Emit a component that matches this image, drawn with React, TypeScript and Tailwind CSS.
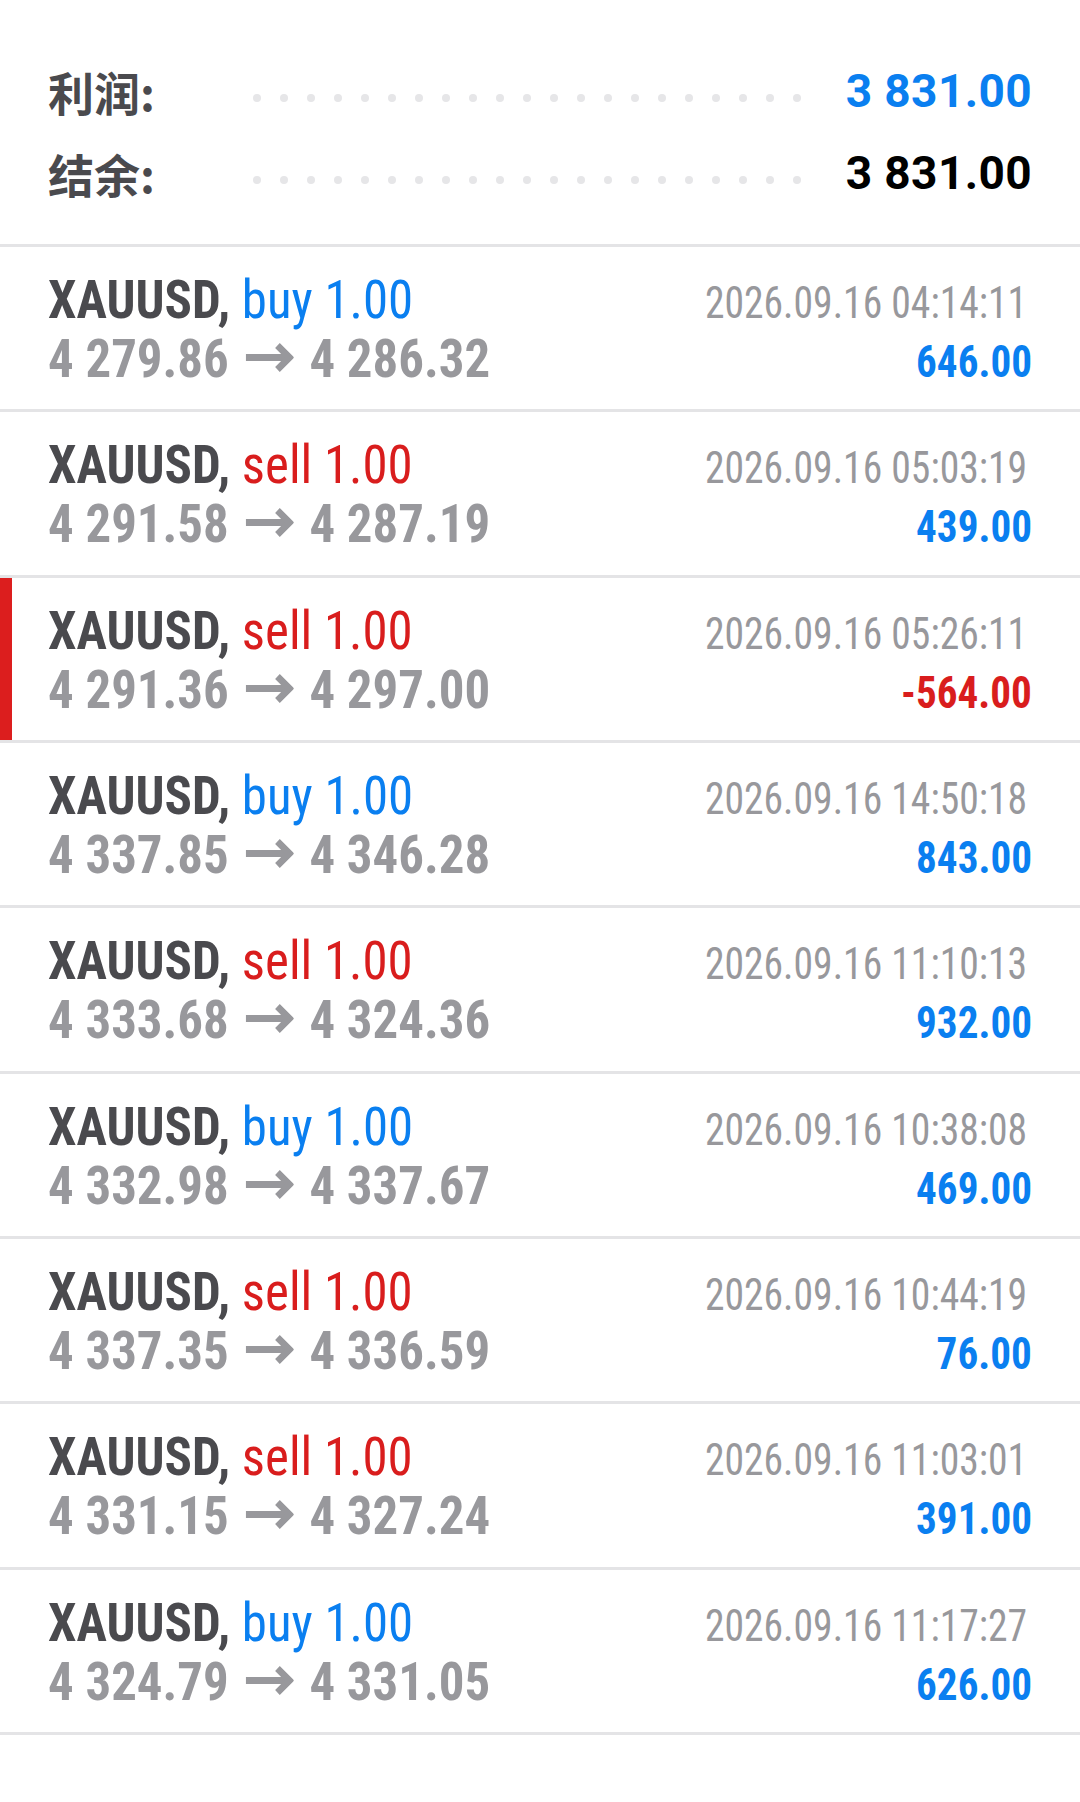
import React from 'react';

type Deal = {
    side: 'buy' | 'sell';
    open: string;
    close: string;
    time: string;
    profit: string;
    marked?: boolean;
};

const deals: Deal[] = [
    { side: 'buy', open: '4 279.86', close: '4 286.32', time: '2026.09.16 04:14:11', profit: '646.00' },
    { side: 'sell', open: '4 291.58', close: '4 287.19', time: '2026.09.16 05:03:19', profit: '439.00' },
    { side: 'sell', open: '4 291.36', close: '4 297.00', time: '2026.09.16 05:26:11', profit: '-564.00', marked: true },
    { side: 'buy', open: '4 337.85', close: '4 346.28', time: '2026.09.16 14:50:18', profit: '843.00' },
    { side: 'sell', open: '4 333.68', close: '4 324.36', time: '2026.09.16 11:10:13', profit: '932.00' },
    { side: 'buy', open: '4 332.98', close: '4 337.67', time: '2026.09.16 10:38:08', profit: '469.00' },
    { side: 'sell', open: '4 337.35', close: '4 336.59', time: '2026.09.16 10:44:19', profit: '76.00' },
    { side: 'sell', open: '4 331.15', close: '4 327.24', time: '2026.09.16 11:03:01', profit: '391.00' },
    { side: 'buy', open: '4 324.79', close: '4 331.05', time: '2026.09.16 11:17:27', profit: '626.00' },
];

const Dots = () => (
    <div className="flex gap-[19px] mt-[14px]">
        {Array.from({ length: 21 }).map((_, i) => (
            <span key={i} className="block w-[8px] h-[8px] rounded-full bg-[#e6e6e8]" />
        ))}
    </div>
);

const SummaryRow = ({ label, value, valueClass }: { label: string; value: string; valueClass: string }) => (
    <div className="flex items-center h-[82px]">
        <div className="w-[205px] text-[46px] font-bold text-[#4a4a4e] font-['Noto_Sans_CJK_SC',sans-serif] leading-none">
            {label}
        </div>
        <Dots />
        <div className={`flex-1 text-right text-[46px] tracking-[0.4px] font-bold leading-none font-['Roboto',sans-serif] ${valueClass}`}>
            {value}
        </div>
    </div>
);

// bold grey arrow between open and close price
const Arrow = () => (
    <svg
        className="inline-block w-[50px] h-[30px] ml-[18px] mr-[16px] align-[5px]"
        viewBox="0 0 50 30"
        fill="none"
        stroke="#98989c"
        strokeWidth="7"
    >
        <path d="M0 15.5H45" />
        <path d="M33 3.5L45.5 15.5L33 27.5" strokeLinejoin="miter" />
    </svg>
);

const DealRow = ({ deal }: { deal: Deal }) => {
    const isBuy = deal.side === 'buy';
    const loss = deal.profit.startsWith('-');
    return (
        <div className="relative h-[165.33px] border-b-[3px] border-[#e4e4e6] flex flex-col justify-center pt-[7px] px-[48px] font-['Roboto_Condensed','Roboto',sans-serif]">
            {deal.marked && <div className="absolute left-0 top-0 bottom-0 w-[12px] bg-[#dc1e1e]" />}
            <div className="flex justify-between items-baseline leading-[57px]">
                <div className="text-[53px] whitespace-nowrap scale-x-[0.96] origin-left">
                    <span className="font-bold text-[#4a4a4e]">XAUUSD,</span>{' '}
                    <span className={isBuy ? 'text-[#0a7ff0]' : 'text-[#d91d1d]'}>{deal.side} 1.00</span>
                </div>
                <div className="text-[45px] text-[#98989c] whitespace-nowrap mr-[5px] scale-x-[0.88] origin-right">
                    {deal.time}
                </div>
            </div>
            <div className="flex justify-between items-baseline leading-[57px]">
                <div className="text-[53px] font-bold text-[#98989c] whitespace-nowrap scale-x-[0.96] origin-left">
                    {deal.open}
                    <Arrow />
                    {deal.close}
                </div>
                <div
                    className={`text-[44px] font-bold whitespace-nowrap scale-x-[0.935] origin-right ${
                        loss ? 'text-[#d91d1d]' : 'text-[#0a7ff0]'
                    }`}
                >
                    {deal.profit}
                </div>
            </div>
        </div>
    );
};

export default function App() {
    return (
        <div className="w-[1080px] h-[1802px] bg-white font-['Roboto',sans-serif] overflow-hidden">
            <div className="px-[48px] pt-[50px] pb-[30px] border-b-[3px] border-[#e4e4e6]">
                <SummaryRow label="利润:" value="3 831.00" valueClass="text-[#0a7ff0]" />
                <SummaryRow label="结余:" value="3 831.00" valueClass="text-black" />
            </div>
            {deals.map((d, i) => (
                <DealRow key={i} deal={d} />
            ))}
        </div>
    );
}
